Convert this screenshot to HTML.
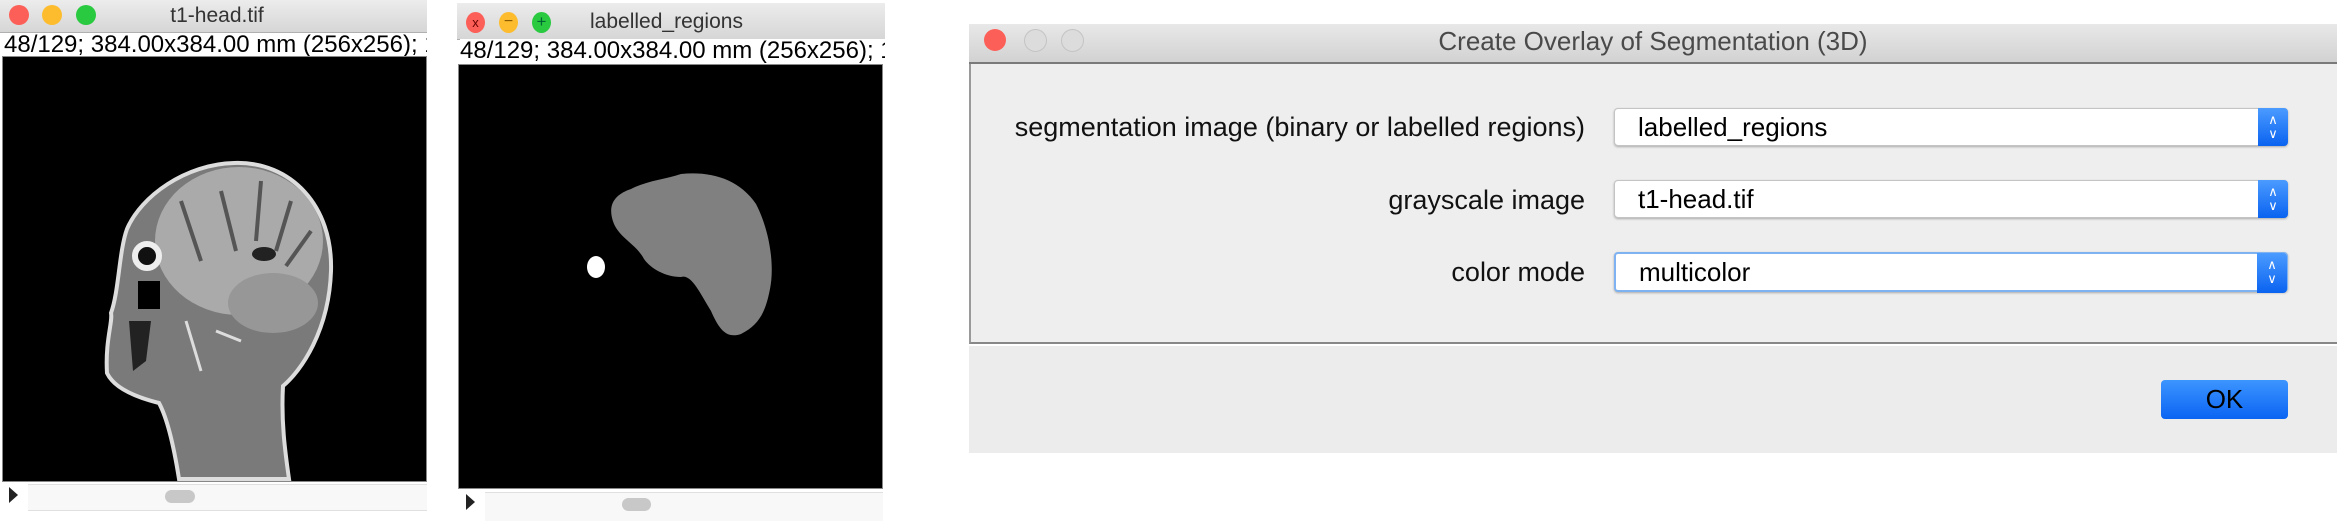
<!DOCTYPE html>
<html><head><meta charset="utf-8"><style>
body{margin:0;width:2337px;height:520px;background:#fff;position:relative;overflow:hidden;font-family:"Liberation Sans",sans-serif}
.abs{position:absolute}
.tb{background:linear-gradient(#ececec,#d6d6d6);border-bottom:1px solid #b0b0b0}
.dot{position:absolute;border-radius:50%}
.info{font-size:24px;color:#000;white-space:nowrap;overflow:hidden;background:#fff;line-height:24px}
.lbl{position:absolute;right:752px;font-size:27px;color:#111;white-space:nowrap}
.cb{position:absolute;left:1614px;width:674px;height:38px;background:#fff;border:1px solid #c4c4c4;border-radius:4px;box-shadow:0 1px 2px #aaa;box-sizing:border-box}
.cb span{position:absolute;left:23px;top:3px;font-size:26px;color:#000}
.cb i{position:absolute;right:-1px;top:-1px;width:30px;height:38px;background:linear-gradient(#4b9bff,#0a63f0);border-radius:0 4px 4px 0;color:#fff;font-style:normal;font-size:13px;line-height:14px;text-align:center;padding-top:5px;box-sizing:border-box}
</style></head><body>
<!-- window 1 -->
<div class="abs tb" style="left:0;top:0;width:427px;height:32px"></div>
<div class="dot" style="left:9px;top:5px;width:20px;height:20px;background:#fc5f57"></div>
<div class="dot" style="left:42px;top:5px;width:20px;height:20px;background:#fdbc2e"></div>
<div class="dot" style="left:76px;top:5px;width:20px;height:20px;background:#29c940"></div>
<div class="abs" style="left:0;width:434px;top:4px;text-align:center;font-size:21px;color:#333">t1-head.tif</div>
<div class="abs info" style="left:4px;top:33px;width:423px;height:23px">48/129; 384.00x384.00 mm (256x256); 16-bit</div>
<div class="abs" style="left:2px;top:56px;width:425px;height:426px;background:#000;border:1px solid #888;box-sizing:border-box">
<svg width="425" height="426" viewBox="2 56 425 426" style="position:absolute;left:0;top:0">
<path d="M233,162 C290,160 332,205 330,270 C328,330 300,370 282,385 C280,420 284,450 288,478 L178,478 C172,440 165,415 158,402 C130,395 112,385 106,372 C104,340 112,320 110,312 C118,290 118,250 126,228 C140,195 185,163 233,162Z" fill="#7a7a7a" stroke="#ddd" stroke-width="4"/>
<ellipse cx="238" cy="240" rx="84" ry="74" fill="#aaaaaa"/>
<ellipse cx="272" cy="302" rx="45" ry="30" fill="#979797"/>
<path d="M180,200 L200,260 M220,190 L235,250 M260,180 L255,240 M290,200 L275,250 M310,230 L285,265" stroke="#555" stroke-width="4" fill="none"/>
<ellipse cx="263" cy="253" rx="12" ry="7" fill="#222"/>
<ellipse cx="146" cy="255" rx="12" ry="12" fill="#111" stroke="#eee" stroke-width="6"/>
<rect x="137" y="280" width="22" height="28" fill="#000"/>
<path d="M128,320 L150,320 L145,360 L132,370Z" fill="#222"/>
<path d="M185,320 L200,370 M215,330 L240,340" stroke="#ddd" stroke-width="3"/>
</svg></div>
<div class="abs" style="left:9px;top:487px;width:0;height:0;border-left:9px solid #222;border-top:8px solid transparent;border-bottom:8px solid transparent"></div>
<div class="abs" style="left:28px;top:484px;width:399px;height:25px;background:#f8f8f8;border-top:1px solid #e0e0e0;border-bottom:1px solid #e0e0e0"></div>
<div class="abs" style="left:165px;top:490px;width:30px;height:13px;background:#c8c8c8;border-radius:7px"></div>
<!-- window 2 -->
<div class="abs tb" style="left:457px;top:3px;width:428px;height:36px"></div>
<div class="dot" style="left:466px;top:12px;width:19px;height:21px;background:#fc5f57;font-size:13px;text-align:center;line-height:21px;color:#600">x</div>
<div class="dot" style="left:499px;top:12px;width:19px;height:21px;background:#fdbc2e;font-size:16px;text-align:center;line-height:20px;color:#8a5a00">−</div>
<div class="dot" style="left:532px;top:12px;width:19px;height:21px;background:#29c940;font-size:17px;text-align:center;line-height:20px;color:#063">+</div>
<div class="abs" style="left:590px;top:10px;font-size:21px;color:#333">labelled_regions</div>
<div class="abs info" style="left:460px;top:39px;width:425px;height:24px">48/129; 384.00x384.00 mm (256x256); 16-bit</div>
<div class="abs" style="left:458px;top:64px;width:425px;height:425px;background:#000;border:1px solid #888;box-sizing:border-box">
<svg width="425" height="425" viewBox="463 64 425 425" style="position:absolute;left:0;top:0">
<path d="M635,188 C650,180 670,178 685,173 C715,170 743,178 760,203 C773,228 779,263 774,288 C770,308 765,323 745,333 C730,338 723,328 715,310 C703,290 695,273 685,276 C670,276 655,268 648,258 C640,243 625,238 618,223 C610,203 620,193 635,188Z" fill="#808080"/>
<ellipse cx="600" cy="266" rx="9" ry="11" fill="#fff"/>
</svg></div>
<div class="abs" style="left:466px;top:494px;width:0;height:0;border-left:9px solid #222;border-top:8px solid transparent;border-bottom:8px solid transparent"></div>
<div class="abs" style="left:485px;top:492px;width:398px;height:28px;background:#f8f8f8;border-top:1px solid #e0e0e0"></div>
<div class="abs" style="left:622px;top:498px;width:29px;height:13px;background:#c8c8c8;border-radius:7px"></div>
<!-- dialog -->
<div class="abs" style="left:969px;top:24px;width:1368px;height:38px;background:linear-gradient(#e8e8e8,#d2d2d2);border-bottom:2px solid #7a7a7a"></div>
<div class="dot" style="left:984px;top:29px;width:22px;height:22px;background:#fc5f57"></div>
<div class="dot" style="left:1024px;top:29px;width:21px;height:21px;background:#dcdcdc;border:1px solid #c4c4c4"></div>
<div class="dot" style="left:1061px;top:29px;width:21px;height:21px;background:#dcdcdc;border:1px solid #c4c4c4"></div>
<div class="abs" style="left:969px;width:1368px;top:26px;text-align:center;font-size:26px;color:#4a4a4a">Create Overlay of Segmentation (3D)</div>
<div class="abs" style="left:969px;top:64px;width:1368px;height:280px;background:#eeeeee;border-left:2px solid #9a9a9a;border-bottom:2px solid #888;box-sizing:border-box"></div>
<div class="abs" style="left:969px;top:346px;width:1368px;height:107px;background:#ececec"></div>
<div class="lbl" style="top:112px">segmentation image (binary or labelled regions)</div>
<div class="lbl" style="top:185px">grayscale image</div>
<div class="lbl" style="top:257px">color mode</div>
<div class="cb" style="top:108px"><span>labelled_regions</span><i>∧<br>∨</i></div>
<div class="cb" style="top:180px"><span>t1-head.tif</span><i>∧<br>∨</i></div>
<div class="cb" style="top:252px;height:40px;border:2px solid #7fb2f0"><span>multicolor</span><i style="height:40px">∧<br>∨</i></div>
<div class="abs" style="left:2161px;top:380px;width:127px;height:39px;background:linear-gradient(#3d95ff,#0a64f2);border-radius:4px;color:#000;font-size:26px;text-align:center;line-height:39px">OK</div>
</body></html>
